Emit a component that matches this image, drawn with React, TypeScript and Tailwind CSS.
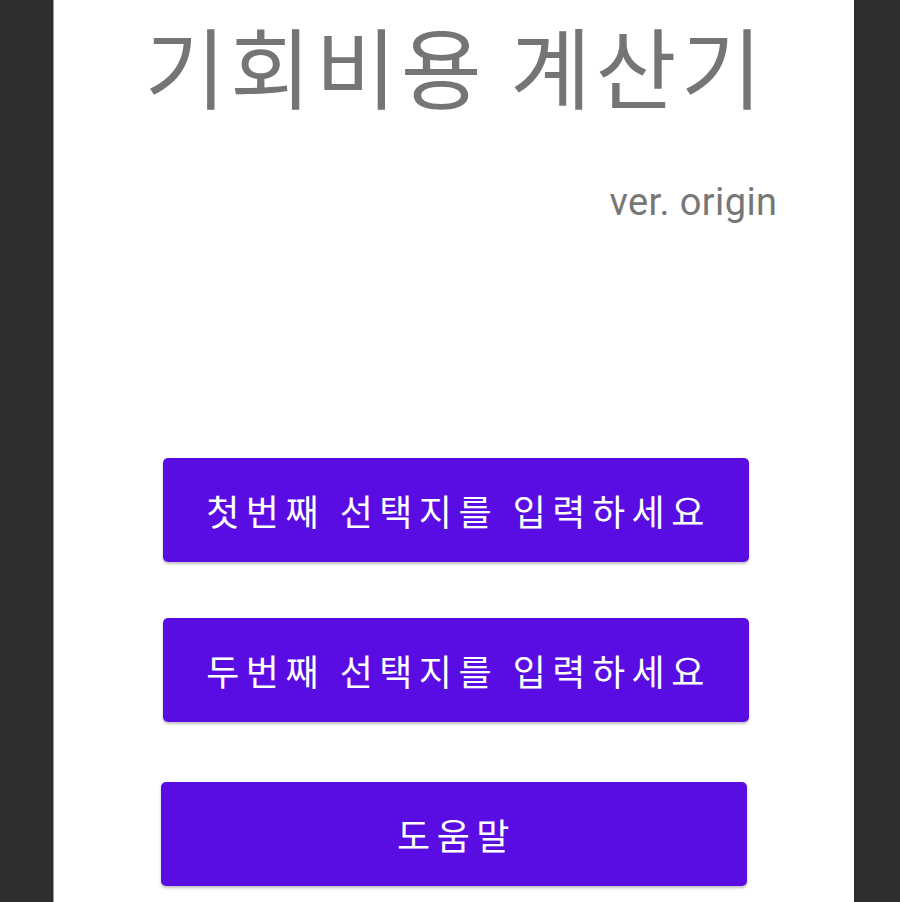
import React from "react";

const btn =
  "h-[104px] rounded-[5px] bg-[#5a0de3] text-white text-[36px] tracking-[6.5px] pl-[6px] shadow-[0_2px_3px_rgba(0,0,0,0.25)] flex items-center justify-center leading-none font-['Noto_Sans_CJK_KR',sans-serif]";

export default function App() {
  return (
    <div className="w-[900px] h-[902px] bg-[#2d2e30] flex justify-center overflow-hidden">
      <div className="w-[801px] ml-[6px] h-full bg-white flex flex-col border-l border-[#9a9a9a] font-['Roboto','Noto_Sans_CJK_KR',sans-serif]">
        <div className="text-[88px] leading-none tracking-[4.4px] pl-[4px] text-[#757575] text-center mt-[20px] font-['Noto_Sans_CJK_KR',sans-serif]">
          기회비용 계산기
        </div>
        <div className="text-[38px] leading-none tracking-[0.4px] text-[#777777] text-right mr-[76px] mt-[75px]">
          ver. origin
        </div>
        <div className="flex flex-col mt-[237px] pl-[109px] pr-[105px]">
          <div className={btn}>첫번째 선택지를 입력하세요</div>
          <div className={btn + " mt-[56px]"}>두번째 선택지를 입력하세요</div>
          <div className={btn + " mt-[60px] -ml-[2px] mr-[2px]"}>도움말</div>
        </div>
      </div>
    </div>
  );
}
